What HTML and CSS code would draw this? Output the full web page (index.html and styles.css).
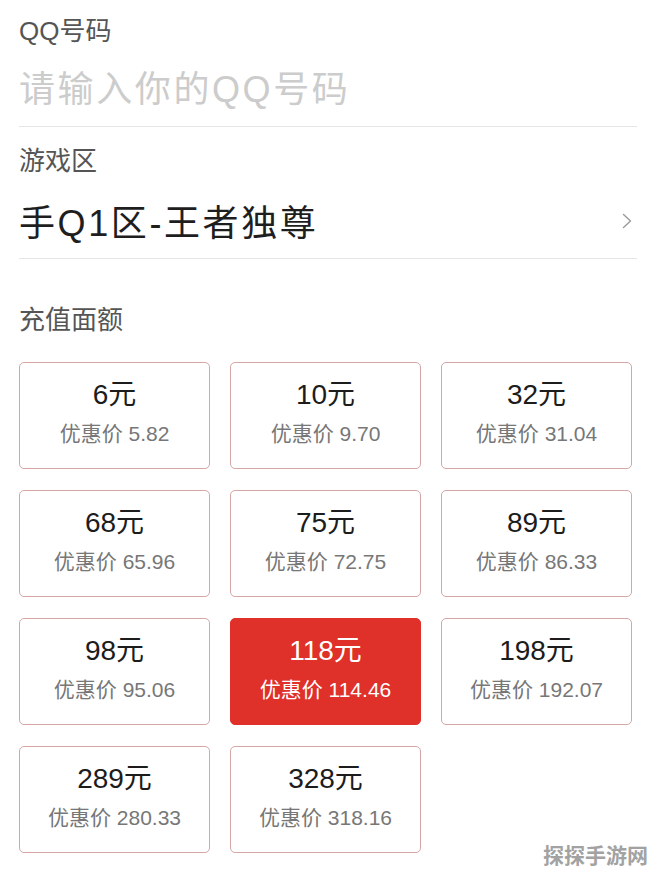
FILE: index.html
```html
<!DOCTYPE html>
<html lang="zh-CN">
<head>
<meta charset="utf-8">
<title>充值</title>
<link rel="stylesheet" href="styles.css">
</head>
<body>
<div class="page">
  <section class="field field-qq">
    <div class="label">QQ号码</div>
    <div class="input placeholder">请输入你的QQ号码</div>
  </section>
  <section class="field field-zone">
    <div class="label">游戏区</div>
    <div class="input value-row">
      <span class="value">手Q1区-王者独尊</span>
      <svg class="chevron" width="10" height="16" viewBox="0 0 10 16"><path d="M1.5 1.5 L8.5 8 L1.5 14.5" fill="none" stroke="#9a9a9a" stroke-width="1.4" stroke-linecap="round" stroke-linejoin="round"/></svg>
    </div>
  </section>
  <div class="section-title">充值面额</div>
  <div class="grid">
    <div class="card"><div class="amount">6元</div><div class="price">优惠价 5.82</div></div>
    <div class="card"><div class="amount">10元</div><div class="price">优惠价 9.70</div></div>
    <div class="card"><div class="amount">32元</div><div class="price">优惠价 31.04</div></div>
    <div class="card"><div class="amount">68元</div><div class="price">优惠价 65.96</div></div>
    <div class="card"><div class="amount">75元</div><div class="price">优惠价 72.75</div></div>
    <div class="card"><div class="amount">89元</div><div class="price">优惠价 86.33</div></div>
    <div class="card"><div class="amount">98元</div><div class="price">优惠价 95.06</div></div>
    <div class="card active"><div class="amount">118元</div><div class="price">优惠价 114.46</div></div>
    <div class="card"><div class="amount">198元</div><div class="price">优惠价 192.07</div></div>
    <div class="card"><div class="amount">289元</div><div class="price">优惠价 280.33</div></div>
    <div class="card"><div class="amount">328元</div><div class="price">优惠价 318.16</div></div>
  </div>
</div>
<div class="watermark">探探手游网</div>
</body>
</html>
```
FILE: styles.css
```css
html, body {
  margin: 0;
  padding: 0;
  background: #ffffff;
}
body {
  width: 654px;
  height: 874px;
  overflow: hidden;
  position: relative;
  font-family: "Liberation Sans", "Noto Sans CJK SC", sans-serif;
}
.page {
  padding: 0 17px 0 19px;
}
.field {
  border-bottom: 1px solid #e6e6e6;
}
.field-qq {
  padding: 13px 0 14px;
}
.field-zone {
  padding: 16px 0 12px;
}
.label {
  font-size: 26px;
  line-height: 36px;
  height: 36px;
  color: #555555;
}
.input {
  height: 44px;
  line-height: 44px;
}
.field-qq .input {
  margin-top: 19px;
}
.field-zone .input {
  margin-top: 23px;
}
.placeholder {
  font-size: 36px;
  letter-spacing: 2.6px;
  color: #cccccc;
}
.value-row {
  display: flex;
  align-items: center;
  justify-content: space-between;
}
.value {
  font-size: 36px;
  letter-spacing: 2.6px;
  color: #1e1e1e;
}
.chevron {
  margin-right: 5px;
  margin-top: -7px;
}
.section-title {
  margin-top: 43px;
  font-size: 26px;
  line-height: 36px;
  height: 36px;
  color: #555555;
}
.grid {
  margin-top: 24px;
  display: grid;
  grid-template-columns: repeat(3, 191px);
  column-gap: 20px;
  row-gap: 21px;
}
.card {
  box-sizing: border-box;
  height: 107px;
  border: 1px solid #d6a6a6;
  border-radius: 5px;
  padding-top: 15px;
  text-align: center;
}
.amount {
  font-size: 28px;
  line-height: 34px;
  color: #1c1c1c;
}
.price {
  margin-top: 8px;
  font-size: 21px;
  line-height: 28px;
  color: #777777;
}
.card.active {
  background: #e0302a;
  border-color: #e0302a;
}
.card.active .amount,
.card.active .price {
  color: #ffffff;
}
.watermark {
  position: absolute;
  right: 6px;
  bottom: 6px;
  font-family: "Noto Sans CJK SC", sans-serif;
  font-size: 21px;
  line-height: 28px;
  font-weight: 700;
  color: #a2a2a2;
}
```
